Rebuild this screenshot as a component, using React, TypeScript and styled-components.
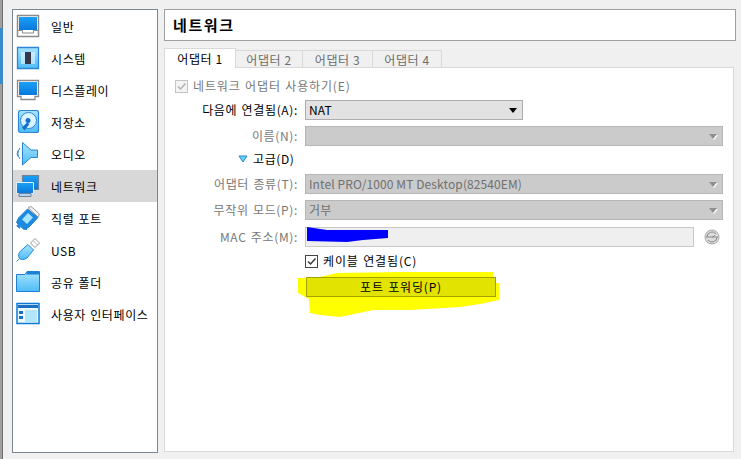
import styled, { createGlobalStyle } from "styled-components";
import type { ReactNode } from "react";

const Global = createGlobalStyle`
  html, body { margin: 0; padding: 0; background: #f0f0f0; }
  * { box-sizing: border-box; }
`;

const FONT = `"Noto Sans CJK KR", "Liberation Sans", sans-serif`;

const Window = styled.div`
  width: 741px;
  height: 459px;
  overflow: hidden;
  display: flex;
  background: #f0f0f0;
  font-family: ${FONT};
  font-size: 12px;
  color: #000;
`;

const Edge = styled.div`
  width: 12px;
  height: 459px;
  flex: none;
`;

const EdgeStrip = styled.div`
  width: 3px;
  height: 100%;
  padding-top: 28px;
  background: #a0a0a0;
  border-right: 1px solid #6e6e6e;
`;

const EdgeBlue = styled.div`
  width: 3px;
  height: 56px;
  background: #3a8bcb;
`;

const Side = styled.nav`
  width: 146px;
  height: 444px;
  margin-top: 9px;
  flex: none;
  background: #fff;
  border: 1px solid #7d8590;
`;

const SideItem = styled.div<{ $active?: boolean }>`
  height: 32px;
  display: flex;
  align-items: center;
  gap: 11px;
  padding-left: 3px;
  background: ${(p) => (p.$active ? "#d8d8d8" : "transparent")};
  letter-spacing: 0.6px;
  word-spacing: 1px;
`;

const IconBox = styled.span`
  width: 24px;
  height: 24px;
  flex: none;
  display: block;
`;

const Defs = styled.svg`
  position: absolute;
`;

const Main = styled.main`
  width: 572px;
  margin-left: 6px;
  margin-top: 9px;
  flex: none;
  display: flex;
  flex-direction: column;
`;

const Header = styled.div`
  height: 32px;
  background: #fff;
  border: 1px solid #a0a0a0;
  padding: 0 0 2px 8px;
  display: flex;
  align-items: center;
  font-size: 15px;
  font-weight: 700;
  letter-spacing: 1.6px;
`;

const Tabs = styled.div`
  display: flex;
  margin-top: 7px;
  height: 20px;
  align-items: flex-end;
  position: relative;
  z-index: 1;
`;

const Tab = styled.div<{ $active?: boolean; $w: number }>`
  height: ${(p) => (p.$active ? "20px" : "18px")};
  width: ${(p) => p.$w}px;
  display: flex;
  align-items: center;
  justify-content: center;
  padding-bottom: ${(p) => (p.$active ? "1px" : "0")};
  letter-spacing: 0.6px;
  background: ${(p) => (p.$active ? "#fff" : "#f0f0f0")};
  color: ${(p) => (p.$active ? "#000" : "#6d6d6d")};
  border: 1px solid #d9d9d9;
  border-bottom: ${(p) => (p.$active ? "none" : "1px solid #d9d9d9")};
  margin-left: ${(p) => (p.$active ? "0" : "-1px")};
`;

const Panel = styled.div`
  width: 570px;
  height: 385px;
  flex: none;
  margin-top: -1px;
  background: #fff;
  border: 1px solid #d9d9d9;
  padding: 8px 0 0 10px;
  display: flex;
  flex-direction: column;
`;

const Row = styled.div<{ $gap: number }>`
  display: flex;
  align-items: center;
  height: 20px;
  flex: none;
  margin-bottom: ${(p) => p.$gap}px;
`;

const Label = styled.label<{ $off?: boolean }>`
  width: 130px;
  flex: none;
  text-align: right;
  padding: 0 7px 2px 0;
  letter-spacing: 0.65px;
  word-spacing: 1px;
  white-space: nowrap;
  color: ${(p) => (p.$off ? "#787878" : "#000")};
`;

const CheckBox = styled.span<{ $off?: boolean }>`
  width: 13px;
  height: 13px;
  flex: none;
  display: flex;
  align-items: center;
  justify-content: center;
  background: ${(p) => (p.$off ? "#f4f4f4" : "#fff")};
  border: 1px solid ${(p) => (p.$off ? "#c4c4c4" : "#444")};
  color: ${(p) => (p.$off ? "#b0b0b0" : "#333")};
`;

const CheckText = styled.span<{ $off?: boolean }>`
  margin-left: 5px;
  padding-bottom: 2px;
  letter-spacing: 0.85px;
  word-spacing: 1px;
  color: ${(p) => (p.$off ? "#787878" : "#000")};
`;

const Combo = styled.div<{ $w: number; $off?: boolean }>`
  width: ${(p) => p.$w}px;
  height: 20px;
  flex: none;
  display: flex;
  align-items: center;
  justify-content: space-between;
  padding: 0 5px 2px 3px;
  background: ${(p) => (p.$off ? "#cbcbcb" : "#e2e2e2")};
  border: 1px solid ${(p) => (p.$off ? "#b6b6b6" : "#adadad")};
  color: ${(p) => (p.$off ? "#707070" : "#000")};
  letter-spacing: 0.1px;
`;

const Arrow = styled.span<{ $off?: boolean }>`
  width: 0;
  height: 0;
  margin-top: 2px;
  border-left: 4px solid transparent;
  border-right: 4px solid transparent;
  border-top: 5px solid ${(p) => (p.$off ? "#8f8f8f" : "#000")};
  filter: ${(p) => (p.$off ? "drop-shadow(1px 1px 0 #fff)" : "none")};
`;

const Advanced = styled.div`
  display: flex;
  align-items: center;
  gap: 5px;
  padding-left: 63px;
  letter-spacing: 0.6px;
`;

const AdvancedText = styled.span`
  padding-bottom: 2px;
`;

const Input = styled.div`
  width: 389px;
  height: 20px;
  flex: none;
  background: #efefef;
  border: 1px solid #c8c8c8;
  position: relative;
`;

const Redact = styled.svg`
  position: absolute;
  left: 0;
  top: -1px;
`;

const Refresh = styled.svg`
  margin-left: 10px;
  flex: none;
`;

const Spacer = styled.span`
  width: 130px;
  flex: none;
`;

const HighlightWrap = styled.div`
  position: relative;
  width: 191px;
`;

const Marker = styled.svg`
  position: absolute;
  left: -9px;
  top: -7px;
`;

const FwdButton = styled.div`
  position: relative;
  margin-left: 1px;
  width: 190px;
  height: 20px;
  display: flex;
  align-items: center;
  justify-content: center;
  padding-bottom: 2px;
  background: #e3e300;
  border: 1px solid #a3a300;
  letter-spacing: 0.8px;
  word-spacing: 1px;
`;

const Icon = ({ children }: { children: ReactNode }) => (
  <IconBox>
    <svg width="24" height="24" viewBox="0 0 24 24">
      {children}
    </svg>
  </IconBox>
);

const Tick = () => (
  <svg width="11" height="11" viewBox="0 0 11 11">
    <path d="M2 5.500l2.500 2.500L9.500 2.500" fill="none" stroke="currentColor" strokeWidth="1.400" />
  </svg>
);

const items: { name: string; icon: ReactNode; active?: boolean }[] = [
  {
    name: "일반",
    icon: (
      <>
        <path d="M1.500 1.500h21v21h-21z" fill="#fff" stroke="#8a8a8a" strokeWidth="1.500" />
        <path d="M3 3h18v13H3z" fill="url(#blue)" />
        <path d="M2 16.500h4.500v2.500h11v-2.500H22" fill="none" stroke="#8a8a8a" />
      </>
    ),
  },
  {
    name: "시스템",
    icon: (
      <>
        <path d="M1.500 1.500h21v21h-21z" fill="url(#sky)" stroke="#2b86d8" strokeWidth="1.300" />
        <path d="M9 6h6v12H9z" fill="#33394a" />
        <path d="M5 7h4M5 9h4M5 11h4M5 13h4M5 15h4M5 17h4M15 7h4M15 9h4M15 11h4M15 13h4M15 15h4M15 17h4" stroke="#fff" />
      </>
    ),
  },
  {
    name: "디스플레이",
    icon: (
      <>
        <path d="M1.500 2.500h21v16H19v3H5v-3H1.500z" fill="#fff" stroke="#8a8a8a" strokeWidth="1.300" />
        <path d="M3 4h18v13H3z" fill="url(#blue)" />
      </>
    ),
  },
  {
    name: "저장소",
    icon: (
      <>
        <rect x="2.500" y="0.500" width="20" height="22" rx="2" fill="url(#sky)" stroke="#2b86d8" strokeWidth="1.200" />
        <circle cx="12.500" cy="10.500" r="8" fill="#dcf4ff" stroke="#2b86d8" />
        <circle cx="12" cy="10.500" r="2.500" fill="#1670c8" />
        <path d="M11 12.500l-5 5 2.500 3 5-6.500z" fill="#1670c8" />
      </>
    ),
  },
  {
    name: "오디오",
    icon: (
      <>
        <path d="M6.500 .5L15 8h6.500v7.500H15L6.500 23z" fill="url(#sky)" stroke="#2b86d8" />
        <path d="M4 6a9 9 0 0 0 0 11M2 8.500a6 6 0 0 0 0 6" fill="none" stroke="#2b86d8" />
      </>
    ),
  },
  {
    name: "네트워크",
    active: true,
    icon: (
      <>
        <path d="M6.500 1.500h16v14h-16z" fill="url(#blue)" stroke="#6c8296" strokeWidth="1.200" />
        <path d="M.5 8.500h17v11H.5z" fill="url(#blue)" stroke="#e6eef5" />
        <path d="M3 19.500h12v3H3z" fill="#b9d4ea" stroke="#6c8296" />
      </>
    ),
  },
  {
    name: "직렬 포트",
    icon: (
      <>
        <path d="M2.500 12L11.500 3 22 11.500 13 21l-5 2.500L.5 16.500z" fill="#1c8ae0" stroke="#1c7fd6" />
        <path d="M12 1.500L15 .5l8.500 7.500L22 11z" fill="#f4f4f4" stroke="#9a9a9a" />
        <path d="M6 13.500L12 7l5 4.500-6 6.500z" fill="#a8e4ff" />
        <path d="M1 19l3 3M9 22l2 1.500" stroke="#1c7fd6" strokeWidth="2" />
      </>
    ),
  },
  {
    name: "USB",
    icon: (
      <>
        <path d="M14.500 5L19 .5 23.500 5 19 9.500z" fill="#fff" stroke="#9a9a9a" />
        <path d="M18 3.500l1 1M20 5.500l1 1" stroke="#666" />
        <path d="M12 6.500l5.500 5.500L11 20c-3 2-6 2-7.500.5C2 18 2.500 15 4.500 13z" fill="url(#sky)" stroke="#2b86d8" />
        <path d="M3.500 20.500L.5 23.500" stroke="#2b86d8" />
      </>
    ),
  },
  {
    name: "공유 폴더",
    icon: (
      <>
        <path d="M.5 21.500V4.500H9l2-3h12.500v20z" fill="url(#sky)" stroke="#1c7fd6" />
        <path d="M10 4.500l1.500-3H23v3z" fill="#1c7fd6" />
      </>
    ),
  },
  {
    name: "사용자 인터페이스",
    icon: (
      <>
        <path d="M1 1.500h22v20H1z" fill="#eafaff" stroke="#0a7ad6" strokeWidth="1.500" />
        <path d="M2 3h20v3H2zM3 9h4v3H3zM3 14h4v3H3z" fill="#1c6fc4" />
        <path d="M9 8h12v12H9z" fill="#b4e6fb" />
      </>
    ),
  },
];

export default function App() {
  return (
    <Window>
      <Global />
      <Edge>
        <EdgeStrip>
          <EdgeBlue />
        </EdgeStrip>
      </Edge>
      <Side>
        <Defs width="0" height="0">
          <defs>
            <linearGradient id="blue" x1="0" y1="0" x2="0" y2="1">
              <stop offset="0" stopColor="#1aa0f5" />
              <stop offset="1" stopColor="#0a78dc" />
            </linearGradient>
            <linearGradient id="sky" x1="0" y1="0" x2="0" y2="1">
              <stop offset="0" stopColor="#a8e4ff" />
              <stop offset="1" stopColor="#4fbcf7" />
            </linearGradient>
          </defs>
        </Defs>
        {items.map((it) => (
          <SideItem key={it.name} $active={it.active}>
            <Icon>{it.icon}</Icon>
            <span>{it.name}</span>
          </SideItem>
        ))}
      </Side>
      <Main>
        <Header>네트워크</Header>
        <Tabs>
          <Tab $active $w={72}>어댑터 1</Tab>
          <Tab $w={68}>어댑터 2</Tab>
          <Tab $w={71}>어댑터 3</Tab>
          <Tab $w={70}>어댑터 4</Tab>
        </Tabs>
        <Panel>
          <Row $gap={4}>
            <CheckBox $off>
              <Tick />
            </CheckBox>
            <CheckText $off>네트워크 어댑터 사용하기(E)</CheckText>
          </Row>
          <Row $gap={6}>
            <Label>다음에 연결됨(A):</Label>
            <Combo $w={218}>
              NAT
              <Arrow />
            </Combo>
          </Row>
          <Row $gap={3}>
            <Label $off>이름(N):</Label>
            <Combo $w={418} $off>
              <span />
              <Arrow $off />
            </Combo>
          </Row>
          <Row $gap={5}>
            <Advanced>
              <svg width="10" height="8" viewBox="0 0 10 8">
                <path d="M1 1h8L5 7z" fill="#6fd0f8" stroke="#1c86d6" />
              </svg>
              <AdvancedText>고급(D)</AdvancedText>
            </Advanced>
          </Row>
          <Row $gap={6}>
            <Label $off>어댑터 종류(T):</Label>
            <Combo $w={418} $off>
              Intel PRO/1000 MT Desktop(82540EM)
              <Arrow $off />
            </Combo>
          </Row>
          <Row $gap={7}>
            <Label $off>무작위 모드(P):</Label>
            <Combo $w={418} $off>
              거부
              <Arrow $off />
            </Combo>
          </Row>
          <Row $gap={4}>
            <Label $off>MAC 주소(M):</Label>
            <Input>
              <Redact width="84" height="16" viewBox="0 0 84 16">
                <path d="M1 0l20 3h61v8l-25 2-16 2-40-1z" fill="#0000ff" />
              </Redact>
            </Input>
            <Refresh width="16" height="16" viewBox="0 0 16 16">
              <circle cx="8" cy="8" r="7" fill="#dcdcdc" stroke="#a8a8a8" />
              <path d="M3 8a5 5 0 0 1 9-3M13 8a5 5 0 0 1-9 3M2 8h7l2-2M14 8H8" fill="none" stroke="#8c8c8c" />
            </Refresh>
          </Row>
          <Row $gap={6}>
            <Spacer />
            <CheckBox>
              <Tick />
            </CheckBox>
            <CheckText>케이블 연결됨(C)</CheckText>
          </Row>
          <Row $gap={0}>
            <Spacer />
            <HighlightWrap>
              <Marker width="206" height="50" viewBox="0 0 206 50">
                <path d="M2 8h17l22-5 63-1h93v11h6v17l-19 4-20 3-50 3H77l-33 7-20-2-10-2-1-14-11-6z" fill="#ffff00" />
              </Marker>
              <FwdButton>포트 포워딩(P)</FwdButton>
            </HighlightWrap>
          </Row>
        </Panel>
      </Main>
    </Window>
  );
}
